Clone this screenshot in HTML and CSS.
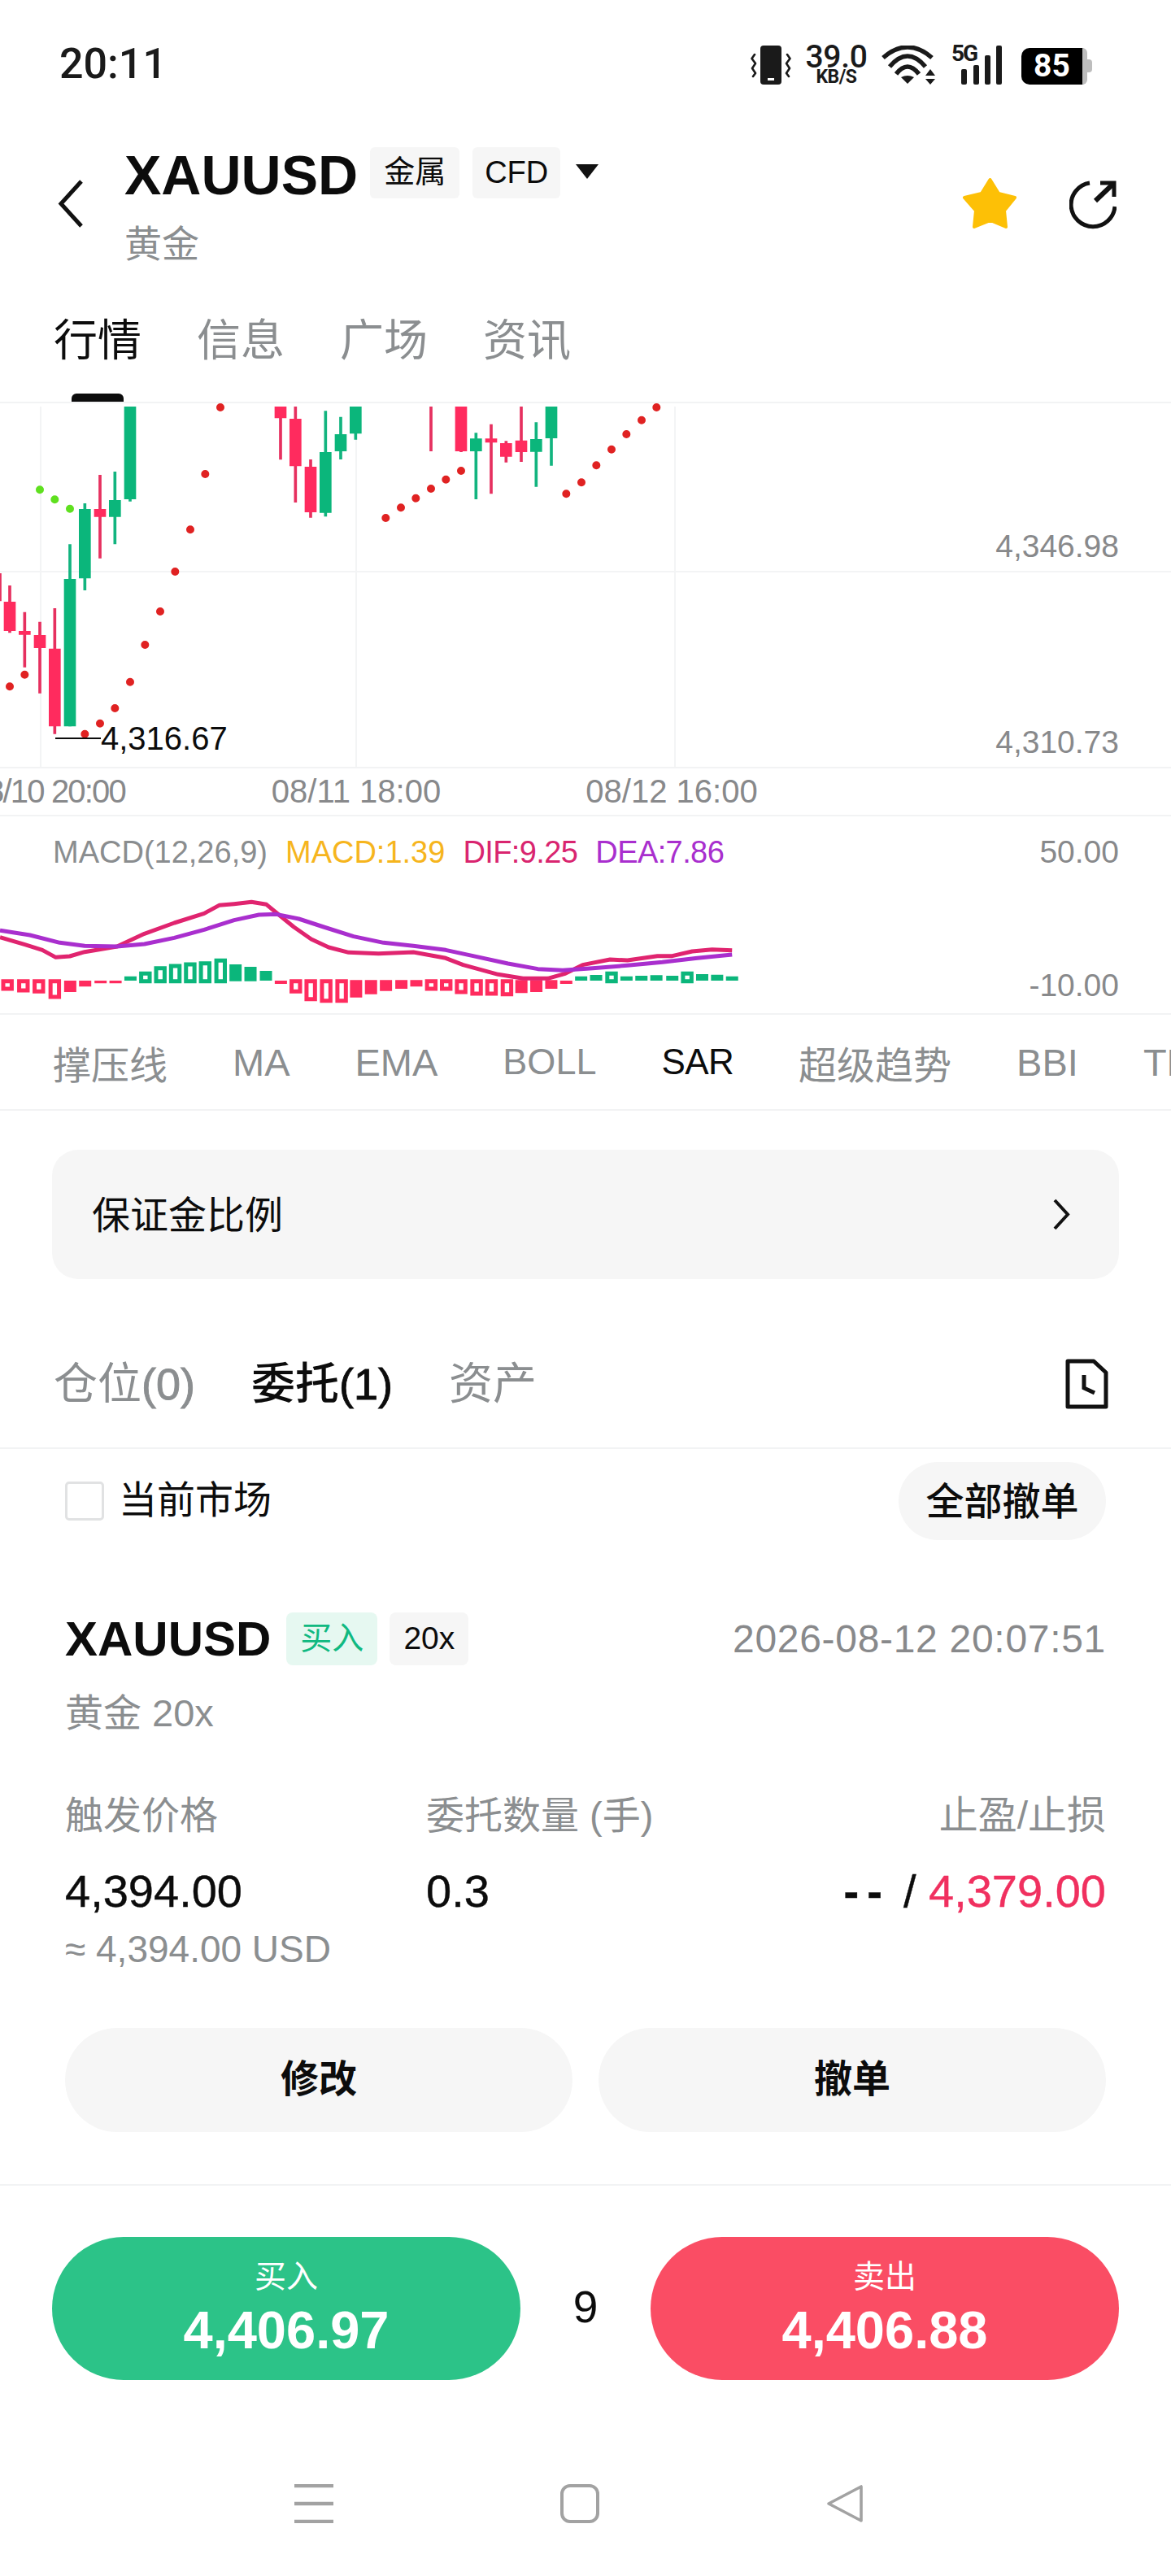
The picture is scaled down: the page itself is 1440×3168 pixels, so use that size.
FILE: index.html
```html
<!DOCTYPE html>
<html lang="zh-CN">
<head>
<meta charset="utf-8">
<title>XAUUSD</title>
<link rel="stylesheet" href="styles.css">
</head>
<body>
<div class="page">

  <div class="status">
    <div class="time">20:11</div>
    <div class="status-icons">
      <svg class="i-vib" width="50" height="48" viewBox="0 0 50 48">
        <rect x="12" y="0" width="26" height="48" rx="4" fill="#1a1a1a"/>
        <rect x="21" y="40" width="8" height="3" fill="#fff"/>
        <path d="M5 11 L1.5 16 L6 22 L2 28 L6 34 L3 38 M45 11 L48.5 16 L44 22 L48 28 L44 34 L47 38" fill="none" stroke="#1a1a1a" stroke-width="2.6" stroke-linecap="round" stroke-linejoin="round"/>
      </svg>
      <div class="speed"><span class="speed-n">39.0</span><span class="speed-u">KB/S</span></div>
      <svg class="i-wifi" width="68" height="48" viewBox="0 0 68 48">
        <path d="M3 15 Q33 -11 63 15 M11 26 Q33 0 55 26 M19 35 Q33 17 47 35" fill="none" stroke="#1a1a1a" stroke-width="5.5" stroke-linecap="butt"/>
        <path d="M25 39 Q33 35 41 39 L33 47 Z" fill="#1a1a1a"/>
        <path d="M55 37 L67 37 L61 29 Z M55 41 L67 41 L61 48 Z" fill="#1a1a1a"/>
      </svg>
      <div class="signal">
        <span class="sig-5g">5G</span>
        <svg width="50" height="48" viewBox="0 0 50 48">
          <rect x="0" y="29" width="7" height="19" rx="2" fill="#1a1a1a"/>
          <rect x="15" y="24" width="7" height="24" rx="2" fill="#1a1a1a"/>
          <rect x="29" y="12" width="7" height="36" rx="2" fill="#1a1a1a"/>
          <rect x="43" y="0" width="7" height="48" rx="2" fill="#1a1a1a"/>
        </svg>
      </div>
      <div class="batt">85</div>
    </div>
  </div>

  <header class="head">
    <svg class="back" width="32" height="59" viewBox="0 0 32 59"><path d="M29 2 L4 29.5 L29 57" fill="none" stroke="#111" stroke-width="5"/></svg>
    <div class="head-main">
      <div class="head-title">
        <h1 class="sym">XAUUSD</h1>
        <span class="tag">金属</span>
        <span class="tag tag-cfd">CFD</span>
        <span class="caret"></span>
      </div>
      <div class="head-sub">黄金</div>
    </div>
    <svg class="star" width="68" height="64" viewBox="0 0 68 64"><polygon points="34.5,3 45,20 65,25 52,41 54,61 35,53 15,61 17,41 3,25 24,20" fill="#fdc006" stroke="#fdc006" stroke-width="4" stroke-linejoin="round"/></svg>
    <svg class="share" width="58" height="60" viewBox="0 0 58 60">
      <path d="M25 3 A27 27 0 1 0 56 32" fill="none" stroke="#111" stroke-width="5"/>
      <path d="M32 25 L53 5" fill="none" stroke="#111" stroke-width="6"/>
      <path d="M38 3 H55 V20" fill="none" stroke="#111" stroke-width="5"/>
    </svg>
  </header>

  <nav class="tabs">
    <a class="tab tab-on">行情</a>
    <a class="tab">信息</a>
    <a class="tab">广场</a>
    <a class="tab">资讯</a>
  </nav>

  <section class="kline">
    <svg class="kline-svg" width="1440" height="447" viewBox="0 0 1440 447">
      <path class="grid" d="M0 207H1440M50 4V447M438 4V447M830 4V447"/>
      <g transform="translate(0,-6) scale(.33333)">
        <path class="wick wick-r" d="M0 645V748M36 690V865M91 788V992M147 824V1088M202 774V1238M369 282V590M1035 30V226M1090 30V384M1146 225V440M1590 30V195M1701 30V198M1812 95V352M1867 157V236M1923 30V234"/>
        <path class="wick wick-g" d="M258 538V1210M313 387V708M424 270V538M480 30V380M1201 46V436M1257 68V225M1312 30V152M1756 127V372M1978 88V326M2034 30V248"/>
        <path class="body body-r" d="M36 750V858M91 858V872M147 873V921M202 923V1210M369 408V437M1035 30V73M1090 75V250M1146 252V420M1701 30V195M1812 148V163M1867 165V215M1923 155V198"/>
        <path class="body body-g" d="M258 666V1210M313 408V664M424 375V437M480 30V372M1201 198V422M1257 132V195M1312 30V130M1756 148V195M1978 150V197M2034 30V147"/>
        <path class="dot dot-r" d="M36 1063h0M91 1019h0M313 1238h0M369 1199h0M424 1143h0M480 1046h0M535 909h0M591 786h0M646 639h0M702 484h0M757 279h0M813 33h0M1423 441h0M1479 403h0M1534 368h0M1590 333h0M1645 299h0M1701 267h0M2089 352h0M2145 310h0M2200 247h0M2256 188h0M2311 132h0M2367 80h0M2422 33h0"/>
        <path class="dot dot-g" d="M147 337h0M202 373h0M258 407h0"/>
      </g>
      <path class="low-line" d="M68 412H124"/>
    </svg>
    <span class="low-val">4,316.67</span>
    <span class="y-lab y-hi">4,346.98</span>
    <span class="y-lab y-lo">4,310.73</span>
  </section>

  <div class="axis">
    <span class="axis-t axis-first">08/10 20:00</span>
    <span class="axis-t">08/11 18:00</span>
    <span class="axis-t">08/12 16:00</span>
  </div>

  <section class="macd">
    <div class="legend">
      <span class="lg-gray">MACD(12,26,9)</span>
      <span class="lg-yel">MACD:1.39</span>
      <span class="lg-pink">DIF:9.25</span>
      <span class="lg-pur">DEA:7.86</span>
    </div>
    <span class="y-lab m-hi">50.00</span>
    <span class="y-lab m-lo">-10.00</span>
    <svg class="macd-svg" width="1440" height="243" viewBox="0 0 1440 243">
      <g transform="translate(0,-4) scale(.6124,.33333)">
        <path class="bar bar-r" d="M141 618V660M171 618V640M202 618V628M232 618V628M564 618V630M715 616V680M745 616V668M775 616V656M806 616V648M836 616V640M1047 616V664M1077 616V660M1107 616V648M1137 618V630"/>
        <path class="bar bar-g" d="M262 602V618M473 558V620M503 567V620M534 582V618M1167 602V618M1197 597V618M1258 602V618M1288 600V618M1318 598V618M1350 600V618M1410 594V618M1440 596V618M1470 602V618"/>
        <g class="hollow-r">
          <rect x="6.5" y="620" width="17" height="28"/><rect x="38.5" y="620" width="17" height="34"/><rect x="69.5" y="620" width="17" height="38"/><rect x="101.5" y="620" width="17" height="58"/>
          <rect x="585.5" y="620" width="17" height="38"/><rect x="615.5" y="620" width="17" height="66"/><rect x="646.5" y="620" width="17" height="72"/><rect x="677.5" y="620" width="17" height="72"/>
          <rect x="857.5" y="620" width="17" height="28"/><rect x="887.5" y="620" width="17" height="28"/><rect x="917.5" y="620" width="17" height="40"/><rect x="948.5" y="620" width="17" height="46"/><rect x="978.5" y="620" width="17" height="46"/><rect x="1009.5" y="620" width="17" height="48"/>
        </g>
        <g class="hollow-g">
          <rect x="283.5" y="592" width="17" height="28"/><rect x="313.5" y="572" width="17" height="48"/><rect x="343.5" y="564" width="17" height="56"/><rect x="373.5" y="558" width="17" height="62"/><rect x="403.5" y="554" width="17" height="66"/><rect x="434.5" y="544" width="17" height="76"/>
          <rect x="1219.5" y="592" width="17" height="28"/><rect x="1371.5" y="592" width="17" height="28"/>
        </g>
        <path class="line line-dif" d="M0 458L50 485L85 505L112 532L140 528L170 512L235 492L290 445L350 405L410 370L440 340L470 335L505 328L535 337L560 375L590 420L625 465L660 495L700 514L760 518L830 513L895 535L930 560L1000 595L1050 610L1100 610L1135 592L1170 560L1225 540L1260 543L1320 527L1350 527L1390 510L1430 503L1470 506"/>
        <path class="line line-dea" d="M0 433L60 450L120 478L170 490L235 492L290 483L350 460L410 430L470 395L520 375L555 373L600 390L650 420L710 455L770 478L830 490L895 505L950 527L1020 555L1080 575L1130 580L1190 572L1260 562L1330 550L1400 535L1470 522"/>
      </g>
    </svg>
  </section>

  <div class="inds">
    <span class="ind">撑压线</span>
    <span class="ind ind-ma">MA</span>
    <span class="ind">EMA</span>
    <span class="ind ind-boll">BOLL</span>
    <span class="ind ind-on">SAR</span>
    <span class="ind">超级趋势</span>
    <span class="ind">BBI</span>
    <span class="ind">TD</span>
  </div>

  <div class="margin-card">
    <span class="margin-t">保证金比例</span>
    <svg width="22" height="41" viewBox="0 0 22 41"><path d="M3 3 L19 20.5 L3 38" fill="none" stroke="#111" stroke-width="4"/></svg>
  </div>

  <div class="pos-tabs">
    <a class="pos-tab">仓位<span class="pos-n">(0)</span></a>
    <a class="pos-tab pos-on">委托<span class="pos-n">(1)</span></a>
    <a class="pos-tab">资产</a>
    <svg class="doc" width="53" height="62" viewBox="0 0 53 62">
      <path d="M3 3 H35 L50 17 V59 H3 Z" fill="none" stroke="#111" stroke-width="5" stroke-linejoin="round"/>
      <path d="M23 20 V36 L36 42" fill="none" stroke="#111" stroke-width="5"/>
    </svg>
  </div>

  <div class="filter">
    <label class="check"><span class="box"></span><span class="check-t">当前市场</span></label>
    <button class="cancel-all">全部撤单</button>
  </div>

  <article class="order">
    <div class="order-head">
      <span class="order-sym">XAUUSD</span>
      <span class="badge badge-buy">买入</span>
      <span class="badge badge-lev">20x</span>
      <span class="order-date">2026-08-12 20:07:51</span>
    </div>
    <div class="order-sub">黄金 20x</div>
    <div class="order-grid">
      <span class="o-lab">触发价格</span>
      <span class="o-lab">委托数量 (手)</span>
      <span class="o-lab o-right o-tp">止盈/止损</span>
      <span class="o-val">4,394.00</span>
      <span class="o-val">0.3</span>
      <span class="o-val o-right"><span class="o-dash">--</span>/ <span class="o-red">4,379.00</span></span>
    </div>
    <div class="order-usd">≈ 4,394.00 USD</div>
    <div class="order-btns">
      <button class="o-btn">修改</button>
      <button class="o-btn">撤单</button>
    </div>
  </article>

  <div class="trade">
    <button class="t-btn t-buy"><span class="t-lab">买入</span><span class="t-num">4,406.97</span></button>
    <span class="spread">9</span>
    <button class="t-btn t-sell"><span class="t-lab">卖出</span><span class="t-num">4,406.88</span></button>
  </div>

  <div class="sysnav">
    <svg width="48" height="48" viewBox="0 0 48 48"><path d="M0 2H48M0 24H48M0 46H48" stroke="#a2a2a2" stroke-width="4.5"/></svg>
    <svg width="48" height="48" viewBox="0 0 48 48"><rect x="2" y="2" width="44" height="44" rx="10" fill="none" stroke="#a2a2a2" stroke-width="4"/></svg>
    <svg width="46" height="48" viewBox="0 0 46 48"><polygon points="43,3 43,45 3,24" fill="none" stroke="#a2a2a2" stroke-width="3.6" stroke-linejoin="round"/></svg>
  </div>
</div>
</body>
</html>
```

FILE: styles.css
```css
* { box-sizing: border-box; }
html, body { margin: 0; padding: 0; background: #fff; }
body { font-family: "Liberation Sans", "Noto Sans CJK SC", sans-serif; color: #0c0c0c; }
button { font-family: inherit; border: 0; padding: 0; color: inherit; }
svg { display: block; flex: none; }
.page { width: 1440px; height: 3168px; overflow: hidden; }

/* status bar */
.status { height: 160px; display: flex; justify-content: space-between; align-items: center; padding: 0 103px 0 73px; }
.time { font: 500 52px/60px Roboto, sans-serif; color: #1a1a1a; margin-top: -2px; }
.status-icons { display: flex; align-items: center; }
.speed { display: flex; flex-direction: column; align-items: center; width: 77px; margin-left: 17px; font-family: Roboto, sans-serif; color: #1a1a1a; }
.speed-n { font-weight: 500; font-size: 39px; line-height: 28px; letter-spacing: -.3px; }
.speed-u { font-weight: 700; font-size: 23px; line-height: 20px; margin-top: 1px; letter-spacing: -.5px; }
.i-wifi { margin-left: 16px; }
.signal { position: relative; width: 62px; height: 48px; margin-left: 19px; display: flex; justify-content: flex-end; }
.sig-5g { position: absolute; left: 0; top: -4px; font: 700 28px/28px Roboto, sans-serif; letter-spacing: -2px; color: #1a1a1a; }
.batt { position: relative; width: 81px; height: 45px; margin-left: 24px; margin-top: 3px; background: #000; border-right: 6px solid #bdbdbd; border-radius: 10px 6px 6px 10px; color: #fff; font: 700 39px/45px Roboto, sans-serif; text-align: center; }
.batt::after { content: ""; position: absolute; right: -12px; top: 14px; width: 6px; height: 16px; background: #bdbdbd; border-radius: 0 4px 4px 0; }

/* header */
.head { height: 180px; display: flex; align-items: center; padding-left: 71px; }
.back { margin-right: 50px; }
.head-main { align-self: flex-start; padding-top: 20px; flex: 1; }
.head-title { display: flex; align-items: center; height: 64px; }
.sym { margin: 0 15px 0 0; font-size: 68px; line-height: 64px; font-weight: 700; position: relative; top: 3px; }
.tag { height: 63px; line-height: 60px; padding: 0 17px; margin-right: 16px; background: #f6f6f6; border-radius: 6px; font-size: 38px; }
.tag-cfd { padding: 0 15px; line-height: 62px; }
.caret { width: 0; height: 0; margin: 0 0 2px 3px; border-style: solid; border-width: 18px 14px 0; border-color: #111 transparent transparent; }
.head-sub { margin-top: 26px; font-size: 46px; line-height: 60px; color: #8b8e90; }
.star { margin-right: 64px; }
.share { margin-right: 67px; margin-top: 4px; }

/* tabs */
.tabs { height: 156px; display: flex; gap: 68px; padding: 49px 0 0 66px; border-bottom: 2px solid #f2f3f4; }
.tab { position: relative; height: 60px; font-size: 54px; line-height: 60px; color: #8b8e90; }
.tab-on { color: #0c0c0c; }
.tab-on::after { content: ""; position: absolute; left: 22px; top: 95px; width: 64px; height: 10px; background: #0c0c0c; border-radius: 6px 6px 0 0; }

/* kline */
.kline { position: relative; height: 449px; border-bottom: 2px solid #f2f3f4; }
.grid { fill: none; stroke: #f3f4f5; stroke-width: 2; }
.wick, .body { fill: none; }
.wick { stroke-width: 11; }
.body { stroke-width: 44; }
.wick-r { stroke: #e6305f; }
.wick-g { stroke: #12b47f; }
.body-r { stroke: #ff2b5e; }
.body-g { stroke: #0bb67b; }
.dot { fill: none; stroke-width: 30; stroke-linecap: round; }
.dot-r { stroke: #e02222; }
.dot-g { stroke: #5fe01f; }
.low-line { fill: none; stroke: #0c0c0c; stroke-width: 2; }
.low-val { position: absolute; left: 124px; top: 387px; font-size: 40px; line-height: 50px; color: #0c0c0c; }
.y-lab { position: absolute; right: 64px; font-size: 39px; line-height: 50px; color: #88898b; }
.y-hi { top: 151px; }
.y-lo { top: 392px; }

/* time axis */
.axis { height: 59px; display: flex; gap: 172px; margin-left: -58px; padding-top: 3px; border-bottom: 2px solid #f2f3f4; width: 1498px; overflow: hidden; }
.axis-t { flex: none; width: 216px; text-align: center; white-space: nowrap; font-size: 40px; line-height: 50px; color: #88898b; }
.axis-first { text-align: right; padding-right: 4px; letter-spacing: -1.8px; }

/* macd */
.macd { position: relative; height: 244px; border-bottom: 2px solid #f2f3f4; }
.legend { position: absolute; left: 65px; top: 19px; display: flex; gap: 22px; font-size: 38px; line-height: 50px; }
.lg-gray { color: #8a8d8f; }
.lg-yel { color: #f6b51e; }
.lg-pink { color: #d9256f; letter-spacing: -.6px; }
.lg-pur { color: #a92fce; letter-spacing: -.6px; }
.m-hi { top: 19px; }
.m-lo { top: 183px; }
.bar { fill: none; stroke-width: 15; vector-effect: non-scaling-stroke; }
.bar-r { stroke: #ff2b5e; }
.bar-g { stroke: #0bb67b; }
.hollow-r rect, .hollow-g rect { fill: #fff; stroke-width: 5; vector-effect: non-scaling-stroke; }
.hollow-r rect { stroke: #ff2b5e; }
.hollow-g rect { stroke: #0bb67b; }
.line { fill: none; stroke-width: 5; stroke-linejoin: round; vector-effect: non-scaling-stroke; }
.line-dif { stroke: #e0246f; }
.line-dea { stroke: #a92fce; }

/* indicator strip */
.inds { height: 118px; display: flex; align-items: center; gap: 80px; padding-left: 65px; border-bottom: 2px solid #f2f3f4; overflow: hidden; white-space: nowrap; font-size: 47px; color: #8b8e90; }
.ind { flex: none; }
.ind-boll { font-size: 45px; }
.ind-on { color: #0c0c0c; font-size: 44px; letter-spacing: -.6px; }

/* margin ratio row */
.margin-card { height: 159px; margin: 48px 64px 0; padding: 0 60px 0 49px; display: flex; align-items: center; justify-content: space-between; background: #f6f6f6; border-radius: 32px; font-size: 47px; }
.margin-t { margin-top: -6px; }

/* position tabs */
.pos-tabs { height: 209px; display: flex; align-items: center; gap: 69px; padding: 49px 77px 0 66px; border-bottom: 2px solid #f2f3f4; font-size: 54px; color: #8b8e90; }
.pos-tab { line-height: 60px; margin-top: 2px; }
.pos-on { color: #0c0c0c; font-weight: 500; }
.pos-n { -webkit-text-stroke: .9px currentColor; }
.doc { margin-left: auto; margin-top: 1px; }

.filter { display: flex; justify-content: space-between; align-items: center; padding: 16px 80px 0; }
.check { display: flex; align-items: center; gap: 18px; font-size: 47px; line-height: 60px; }
.check-t { margin-top: -3px; }
.box { width: 48px; height: 48px; border: 3px solid #e1e2e3; border-radius: 5px; }
.cancel-all { height: 96px; width: 255px; padding-bottom: 8px; border-radius: 48px; background: #f6f6f6; font-size: 47px; font-weight: 500; }

/* order */
.order { padding: 89px 80px 0; height: 794px; border-bottom: 2px solid #f2f3f4; }
.order-head { display: flex; align-items: center; height: 65px; }
.order-sym { font-size: 60px; font-weight: 700; margin-right: 19px; line-height: 65px; }
.badge { height: 65px; line-height: 63px; padding: 0 17px; border-radius: 8px; font-size: 39px; margin-right: 15px; }
.badge-buy { background: #e6f8f1; color: #10b981; }
.badge-lev { background: #f6f6f6; }
.order-date { margin-left: auto; font-size: 48px; color: #88898b; letter-spacing: .7px; }
.order-sub { margin-top: 29px; font-size: 47px; line-height: 60px; color: #8b8e90; }
.order-grid { display: grid; grid-template-columns: 444px 1fr auto; row-gap: 32px; margin-top: 66px; }
.o-lab { font-size: 47px; line-height: 60px; color: #8b8e90; }
.o-tp { font-size: 48px; }
.o-val { font-size: 56px; line-height: 62px; color: #0c0c0c; -webkit-text-stroke: .4px currentColor; }
.o-right { text-align: right; }
.o-dash { letter-spacing: 10px; font-weight: 700; margin-right: 16px; }
.o-red { color: #f0305f; }
.order-usd { margin-top: 10px; font-size: 46px; line-height: 60px; color: #8b8e90; }
.order-btns { display: grid; grid-template-columns: 1fr 1fr; gap: 32px; margin-top: 67px; }
.o-btn { height: 128px; padding-bottom: 12px; border-radius: 64px; background: #f6f6f6; font-size: 47px; font-weight: 700; }

/* trade bar */
.trade { display: grid; grid-template-columns: 576px 1fr 576px; align-items: center; margin-top: 63px; padding: 0 64px; }
.t-btn { height: 176px; border-radius: 88px; color: #fff; display: flex; flex-direction: column; align-items: center; padding-top: 24px; }
.t-buy { background: #2cc388; }
.t-sell { background: #fa4d64; }
.t-lab { font-size: 39px; line-height: 50px; }
.t-num { font-size: 65px; line-height: 70px; font-weight: 700; margin-top: 6px; }
.spread { text-align: center; font-size: 55px; line-height: 60px; color: #0c0c0c; margin-top: -4px; }

/* system nav */
.sysnav { display: flex; gap: 279px; margin-top: 128px; padding-left: 362px; }
```
